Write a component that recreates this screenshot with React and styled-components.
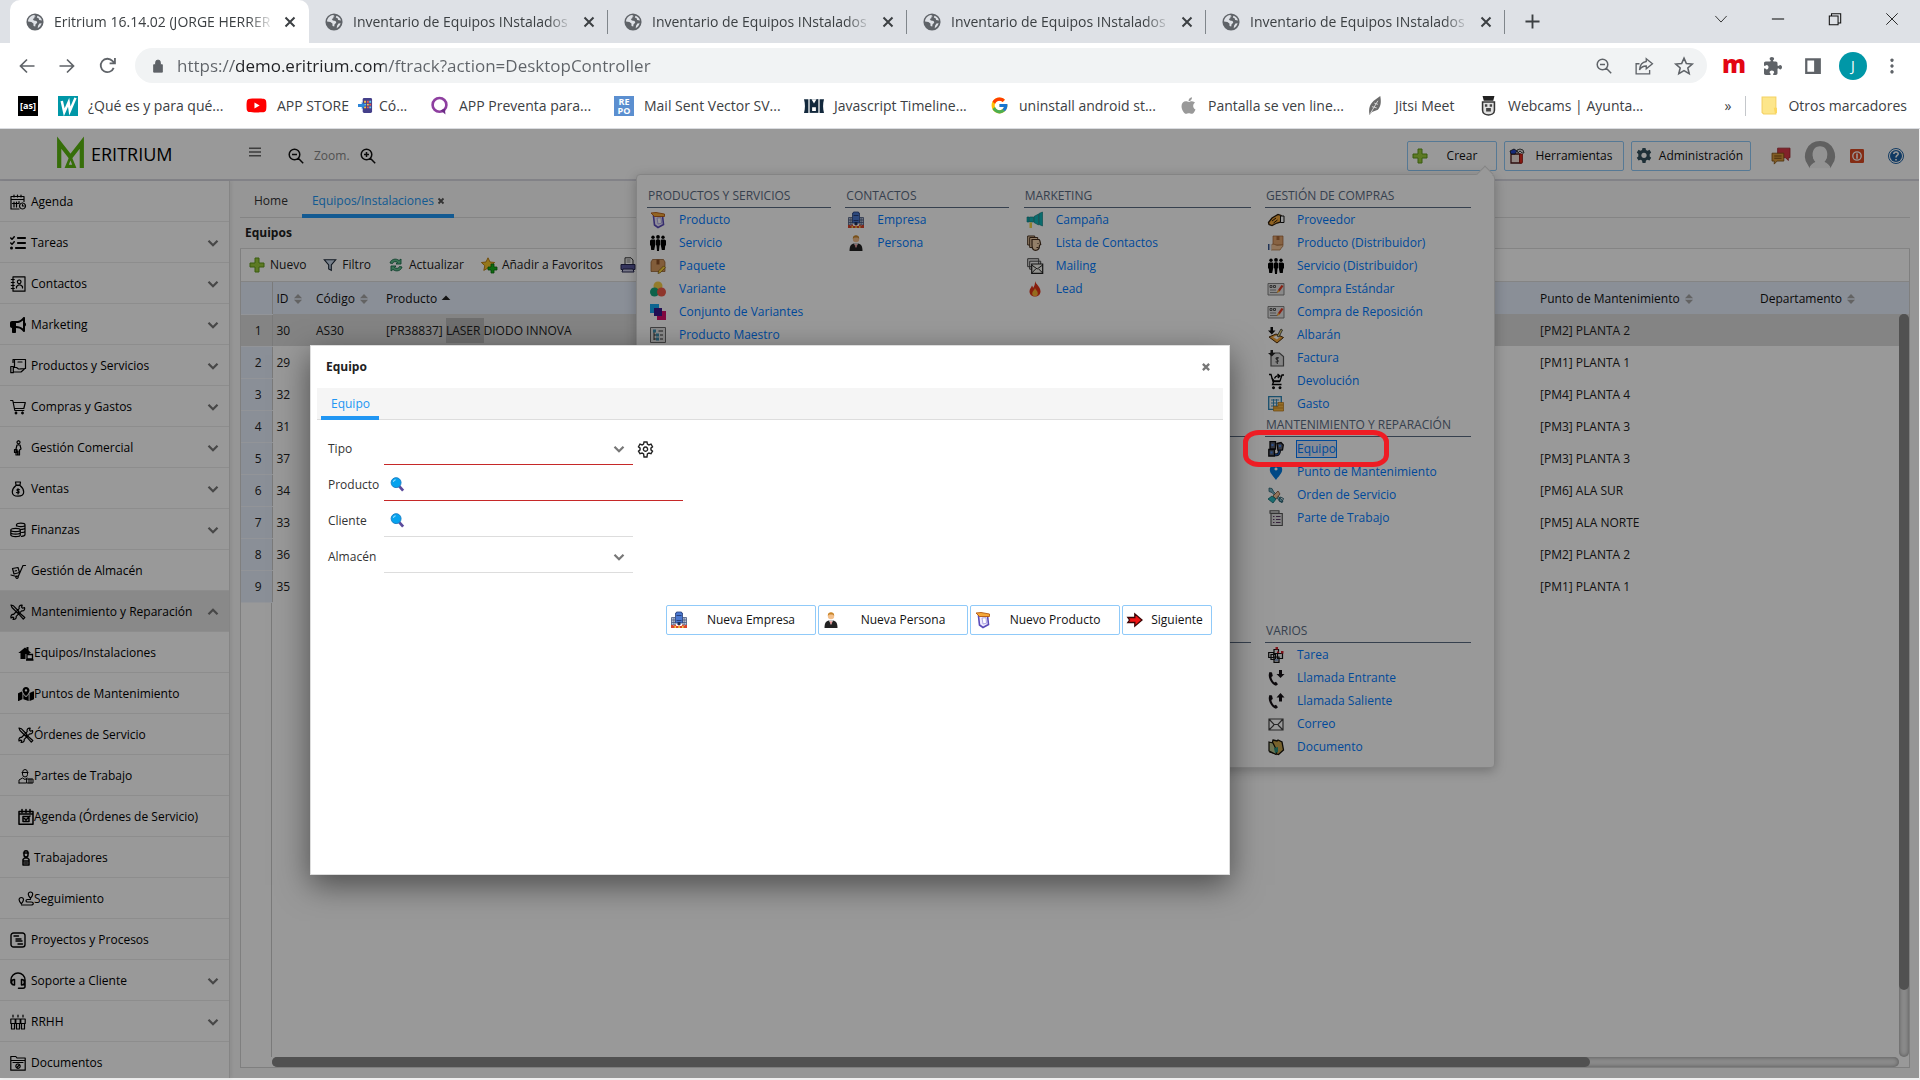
import React from "react";
import styled, { createGlobalStyle, css } from "styled-components";
import { FaListCheck, FaBullhorn, FaPuzzlePiece, FaApple, FaYoutube } from "react-icons/fa6";
import { FaMapMarkedAlt } from "react-icons/fa";
import { FcGoogle } from "react-icons/fc";

const GlobalStyle = createGlobalStyle`
  *, *::before, *::after { box-sizing: border-box; }
  body { margin: 0; background: #fff; color: #212121; font: 12px/16px "Open Sans", "Noto Sans", sans-serif; }
  button, input, select { font: inherit; color: inherit; border: 0; background: none; padding: 0; margin: 0; border-radius: 0; }
  button { cursor: pointer; }
  a { color: inherit; text-decoration: none; }
  ul { list-style: none; margin: 0; padding: 0; }
  h2, h3 { margin: 0; font: inherit; }
  svg { display: block; flex: none; }
`;

/* ---------- icons ---------- */

const Svg = styled.svg`
  width: ${(p) => p.$s}px;
  height: ${(p) => p.$s}px;
  overflow: visible;
`;

const line = { fill: "none", stroke: "currentColor", strokeWidth: 1.2, strokeLinecap: "round", strokeLinejoin: "round" };

const art = {
  globe: (
    <>
      <circle cx="8" cy="8" r="7.6" fill="#5f6368" />
      <path d="M7.2 1.8C4 2.2 1.9 4.800 1.800 7.600l3 .3 1.800 1.400.1 2.200 1.500.4.300-2 1.500-1.300-.6-1.500-2.400-.5-1-1.300 1.400-.6.2-1.500 1.200-.4zM10.200 2.400 9.600 4l1.600.7.5 1.600 2.500.3C13.600 4.500 12.200 3 10.200 2.400zM13.900 9.200l-2 .2-1.200 2-.3 2.100c1.700-.7 3-2.300 3.500-4.300z" fill="#dee1e6" />
    </>
  ),
  close: <path d="M3.500 3.500l9 9M12.500 3.500l-9 9" fill="none" stroke="currentColor" strokeWidth="2" />,
  closeBold: <path d="M3 3l10 10M13 3L3 13" fill="none" stroke="currentColor" strokeWidth="3.600" />,
  thinClose: <path d="M1.500 1.500l13 13M14.500 1.500l-13 13" fill="none" stroke="currentColor" strokeWidth="1" />,
  plusThin: <path d="M8 0.500v15M.500 8h15" fill="none" stroke="currentColor" strokeWidth="2" />,
  down: <path d="M1.500 4.500l6.500 7 6.500-7" fill="none" stroke="currentColor" strokeWidth="1.100" />,
  min: <path d="M1 8h14" stroke="currentColor" strokeWidth="1.200" />,
  max: <path d="M1.500 4.500h10v10h-10zM4 4.500V2h10.500v10.500h-3" fill="none" stroke="currentColor" strokeWidth="1.200" />,
  back: <path d="M15.500 8H1.500M8 1.500L1.500 8 8 14.500" fill="none" stroke="currentColor" strokeWidth="1.700" />,
  fwd: <path d="M.500 8h14M8 1.500L14.500 8 8 14.500" fill="none" stroke="currentColor" strokeWidth="1.700" />,
  reload: <path d="M13.800 10.200A6.300 6.300 0 1 1 12.600 3.700L15 6M15 1v5h-5" fill="none" stroke="currentColor" strokeWidth="1.700" />,
  lock: <path d="M3 6.500h10V15H3zM5.200 6.500V4a2.800 2.800 0 0 1 5.600 0v2.500" fill="currentColor" fillRule="evenodd" stroke="currentColor" strokeWidth="1" />,
  zoomOut: <path d="M6.500 1.200a5.300 5.300 0 1 0 0 10.600 5.300 5.300 0 0 0 0-10.600zM10.300 10.300L15.200 15.200M4 6.500h5" fill="none" stroke="currentColor" strokeWidth="1.500" />,
  zoomIn: <path d="M6.500 1.200a5.300 5.300 0 1 0 0 10.600 5.300 5.300 0 0 0 0-10.600zM10.300 10.300L15.200 15.200M4 6.500h5M6.500 4v5" fill="none" stroke="currentColor" strokeWidth="1.500" />,
  share: <path d="M4 6H1v9h12v-3.500M10 1.500L15.500 6 10 10.500V8C7 8 5.300 9 4 11.500 4.300 7.500 6.300 4.500 10 4z" fill="none" stroke="currentColor" strokeWidth="1.200" />,
  star: <path d="M8 1l2.100 4.800 5.200.5-3.900 3.400 1.200 5.100L8 12.100l-4.600 2.700 1.200-5.100L.7 6.300l5.200-.5z" fill="none" stroke="currentColor" strokeWidth="1.400" />,
  panel: <path d="M1 1h14v14H1zM3 3v10h6V3z" fill="currentColor" fillRule="evenodd" />,
  dots: <path d="M8 .5a1.700 1.700 0 1 0 .01 0zM8 6.300a1.700 1.700 0 1 0 .01 0zM8 12.100a1.700 1.700 0 1 0 .01 0z" fill="currentColor" />,
  w: (
    <>
      <path d="M0 0h16v16H0z" fill="#0097a7" />
      <path d="M3 4l2 9L8.500 5l1 7L14 1.500" fill="none" stroke="#fff" strokeWidth="2" />
    </>
  ),
  phoneApp: (
    <>
      <rect x="5" y="0" width="10" height="16" rx="1.500" fill="#45408a" />
      <path d="M6.500 3h2v2h-2zM9.500 6h2v2h-2zM6.500 9h2v2h-2z" fill="#f6c445" />
      <path d="M9.500 3h2v2h-2zM12 6h2v2h-2zM9.500 9h2v2h-2z" fill="#ef5b52" />
      <path d="M12 3h2v2h-2zM6.500 6h2v2h-2zM12 9h2v2h-2z" fill="#5fc9f0" />
      <path d="M0 6.500h4V4l4 4-4 4V9.500H0z" fill="#2e86d8" />
    </>
  ),
  ring: (
    <>
      <circle cx="8" cy="7.500" r="5.800" fill="none" stroke="#8e3fa0" strokeWidth="2.200" />
      <path d="M9 12l4 3.500-.5-5" fill="#6c2a86" />
    </>
  ),
  film: (
    <>
      <path d="M0 2.500h3.500v11H0c1-3.500 1-7.500 0-11zM16 2.500h-3.500v11H16c-1-3.500-1-7.500 0-11z" fill="#12283c" />
      <path d="M4.500 2.500h7v11h-7z" fill="#12283c" />
      <path d="M6 2.500h4L8 6zM6.500 9h3v3h-3z" fill="#fff" />
    </>
  ),
  feather: (
    <>
      <path d="M3 16c-1-5 0-9 3.500-12L12 0c1 5 .5 9-2 11.500L5 13.500z" fill="#6b6b6b" />
      <path d="M3.500 15L10 4M5 9l4 1M7 6l3 1" stroke="#d8d8d8" strokeWidth=".8" fill="none" />
    </>
  ),
  crest: (
    <>
      <path d="M3 0h10l-1 4H4z" fill="#222" />
      <path d="M3 5h10v7c0 3-3 4-5 4s-5-1-5-4z" fill="#e0e0e0" stroke="#333" strokeWidth="1.300" />
      <path d="M5 7h2v2H5zM9 7h2v2H9zM6 10h4v3H6z" fill="#444" />
    </>
  ),
  folder: (
    <>
      <path d="M1 0h13v16H2.500L1 14.500z" fill="#fde68a" stroke="#f4d163" />
      <path d="M12 10h3v5h-2z" fill="#fbd75e" />
    </>
  ),
  calendar: <path {...line} d="M1 2.500h13v5M1 2.500V15h8M1 5.500h13M4 1v2M7.500 1v2M11 1v2M4 8v5M6.500 8v5M9 7.500v2M2.500 9.500h6M12.500 9a3 3 0 1 0 .01 0M12.500 10.500V12H14" />,
  contact: <path {...line} d="M3 .8h12v14.400H3zM1.300 3.500h3M1.300 6.500h3M1.300 9.500h3M1.300 12.500h3M9.200 4a1.800 1.800 0 1 0 .01 0M6.500 12V10.500l2-1.500h2l2 1.500V12" />,
  handBox: <path {...line} d="M4.500 9V1.500h11v9l-5 .3M3 4.500V1.500h1.500M8 4h4M.8 8.500h2.500v6.200H.8zM3.500 9.500h3l2 1.500h2.500M3.500 14h7.500l4-3.500" />,
  cart: <path {...line} d="M.6 1.500h2.200l2 10h9M3.300 3.500h12l-1.500 6H4.500M6 13.200a.8.8 0 1 0 .01 0M12.500 13.200a.8.8 0 1 0 .01 0" />,
  walker: <path {...line} d="M8.500 .8a1.500 1.500 0 1 0 .01 0M7 5h3l1 4-1.500 1v5H8v-4l-.5 4H6V9zM4.500 9.500H7v3H4.500z" />,
  bag: <path {...line} d="M5.500 1h5L10 4H6zM6 4.500C3.500 6.500 2.300 8.500 2.300 11c0 2.800 1.800 4.200 5.700 4.200s5.700-1.400 5.700-4.200c0-2.500-1.200-4.500-3.700-6.500zM9.500 8.700c-2.500-1-3.500.3-1.500 1.300s1 2.500-1.500 1.500M8 7.700v5.200" />,
  coins: <path {...line} d="M6.500 4V2.800C6.500.5 15 .5 15 2.800v9.700c0 1-1.500 1.700-3.500 1.900M6.500 3c0 2.200 8.500 2.200 8.500 0M10 7.500c3 0 5-.7 5-1.700M11.500 10.500c2 0 3.500-.6 3.500-1.500M.8 8c0-2.200 9.500-2.200 9.500 0v5c0 2.200-9.500 2.200-9.500 0zM.8 8c0 2.200 9.500 2.200 9.500 0M.8 10.500c0 2.200 9.500 2.200 9.500 0" />,
  dolly: <path {...line} d="M15.500 2.500h-2.500L8 14M1 12l5.500 1.500M2.500 5.500l5.500-1 1.500 5-5.500 1.500zM5 8l1.500-.4M7 13a1.200 1.200 0 1 0 .01 0" />,
  tools: <path {...line} d="M1 1l2.500.8L9 7.500 7.500 9 2 3.500zM9 8.500l5.800 5-1.500 1.700-5.300-6M14.500 3.500l-2 .7-1-1 .7-2C10 .8 8.500 2.500 9.200 4.700L3.500 10.500C1.500 10 .5 12 1 14l1.800-1 1 1L3 15.300c2 .5 3.700-1 3.200-3l5.500-5.500c2 .6 3.600-1.200 2.800-3.300z" />,
  houseBox: (
    <>
      <path d="M.3 8L7 2.500 8.500 3.700V2h2v3.300L13 8h-1.500v1H7.500v5H2.500V8z" fill="currentColor" />
      <path d="M9 9.500h5.500V14H9zM8 15h7.500" fill="none" stroke="currentColor" strokeWidth="1.300" />
    </>
  ),
  worker: <path {...line} strokeWidth="1" d="M4 4.500h6M4.500 4.500a2.500 3 0 0 1 5 0v2a2.500 2.500 0 0 1-5 0zM1 15v-3l3.500-2L7 11.500 9 10M1 15h7M9 11h6v4H9zM11 11v4M13 11v4" />,
  calCheck: <path {...line} strokeWidth="1.500" d="M1 2.500h14v12.700H1zM1 5h14M4 .5v3M8 .5v3M12 .5v3M5 7.500h6v5H5zM6.500 9.500l1.500 1.500 4-4" />,
  guard: <path {...line} strokeWidth="1.500" d="M5.500 3h5M6 3c0-3 4-3 4 0v2c0 2.500-4 2.500-4 0zM5 15V9.500L6.500 8h3L11 9.500V15zM5 11h6M6.500 13h3" />,
  route: <path {...line} d="M12.500 1a2.200 2.200 0 0 1 2.200 2.300c0 1.500-2.200 4-2.200 4s-2.200-2.500-2.200-4A2.200 2.200 0 0 1 12.500 1zM3.300 6.500a2.200 2.200 0 0 1 2.200 2.300c0 1.500-2.200 4-2.200 4s-2.200-2.500-2.200-4a2.200 2.200 0 0 1 2.200-2.300zM12.500 8.500H9.500c-2 0-2 2.500 0 2.500H13c3 0 3 3 0 3H3.500" />,
  process: <path {...line} strokeWidth="1.400" d="M3.500 1h9A2.500 2.500 0 0 1 15 3.500v9a2.500 2.500 0 0 1-2.500 2.500h-9A2.500 2.500 0 0 1 1 12.500v-9A2.500 2.500 0 0 1 3.500 1zM4 4h4.500M6 7h5M6 9h6M8 12h4.500" />,
  headset: <path {...line} strokeWidth="1.500" d="M1 10V7a7 7 0 0 1 14 0v6.500c0 1-1 1.700-2 1.700H8.500M4.500 6.500v5.500c-4 0-4-5.500 0-5.500zM11.500 6.500v5.500c4 0 4-5.500 0-5.500z" />,
  people: <path {...line} d="M3 1v2M8 1v2M13 1v2M.800 5h4.400v4.500H.8zM5.800 5h4.400v4.500H5.800zM10.800 5h4.400v4.500h-4.400zM1.500 9.500V15h3V9.500M6.500 9.500V15h3V9.500M11.500 9.500V15h3V9.500" />,
  docFolder: <path {...line} d="M.8 15.200V1.500h5L7 3h8.200v12.200zM.8 5.500h14.400M3 7.500h10M8 9a2.200 2.200 0 1 0 .01 0M7.300 12l1.500-1.500" />,
  plus: <path d="M6 1h4v5h5v4h-5v5H6v-5H1V6h5z" fill="#9ccc3c" stroke="#5f9a1a" strokeWidth="1" />,
  filter: <path d="M1.500 2h13L9.500 8v6l-3-1.500V8z" fill="#c9d8ea" stroke="#1e2a3a" strokeWidth="1.300" />,
  refresh: (
    <>
      <path d="M2 6c1-4 6-5 9-2.500L13 2v5H8l1.500-1.500C7.500 4 5 4.500 4.500 6.500z" fill="#5fc08c" stroke="#17694a" strokeWidth=".9" />
      <path d="M14 10c-1 4-6 5-9 2.500L3 14V9h5l-1.500 1.500c2 1.500 4.500 1 5-1z" fill="#5fc08c" stroke="#17694a" strokeWidth=".9" />
    </>
  ),
  fav: (
    <>
      <path d="M7 .8l2 4.200 4.700.5-3.500 3.200 1 4.700L7 11l-4.200 2.400 1-4.700L.4 5.500 5 5z" fill="#f9c62c" stroke="#b8770a" strokeWidth=".9" />
      <path d="M10 7h3v3h3v3h-3v3h-3v-3H7v-3h3z" fill="#18b31c" stroke="#0a6d10" strokeWidth=".8" />
    </>
  ),
  print: (
    <>
      <path d="M5 8V.8h6L13 3v5" fill="#fff" stroke="#333" />
      <path d="M6.500 3h4M6.500 5h4" stroke="#777" />
      <path d="M1 7.500h14v5H1z" fill="#5a5a9e" stroke="#24244e" />
      <path d="M3 12h10l1 3H2z" fill="#c9c9e6" stroke="#24244e" />
    </>
  ),
  toolbox: (
    <>
      <path d="M2 6h9v9H2z" fill="#f2e3dd" stroke="#4b1818" strokeWidth="1.300" />
      <path d="M1 3l4-2 3 2-2 3H2z" fill="#2947c8" stroke="#111" strokeWidth=".8" />
      <path d="M8 2l3-1 3 1 1 3h-2l-2-2-2 2z" fill="#ddd" stroke="#222" strokeWidth=".8" />
      <path d="M10.500 6h3v8a1.500 1.500 0 0 1-3 0z" fill="#e3271a" stroke="#7e0e08" strokeWidth=".7" />
    </>
  ),
  gear: (
    <>
      <path d="M6.500 0h3l.5 2 1.500.7 2-.9 1.700 2.700-1.500 1.400v2.500l1.500 1.400-1.700 2.700-2-.8-1.500.8-.5 2.500h-3l-.5-2.500-1.500-.8-2 .8L.8 9.800l1.500-1.400V5.900L.8 4.500l1.700-2.700 2 .9L6 2z" fill="#34515e" />
      <circle cx="8" cy="7.300" r="2.600" fill="#fff" />
    </>
  ),
  gearLine: <path d="M6.600 .9h2.800l.4 2 1.400.8 2-.7 1.400 2.400-1.500 1.300v1.600l1.500 1.300-1.400 2.400-2-.7-1.400.8-.4 2.900H6.600l-.4-2.900-1.400-.8-2 .7-1.400-2.400 1.500-1.300V6.700L1.400 5.400 2.800 3l2 .7 1.400-.8zM8 5.700a2 2 0 1 0 .01 0" fill="none" stroke="#222" strokeWidth="1.300" />,
  chat: (
    <>
      <path d="M5 1h11v8.500h-1.500V12L12 9.500H5z" fill="#d93a46" stroke="#9c1e2a" strokeWidth=".7" />
      <path d="M0 5.500h10.500v7H4.500L2 15.200v-2.700H0z" fill="#d99a3c" stroke="#7c4c10" strokeWidth=".7" />
      <path d="M2 8h6.500M2 10h6.500" stroke="#7c4c10" strokeWidth=".9" />
    </>
  ),
  avatar: (
    <>
      <path d="M8 0a8 8 0 0 1 6.500 12.700l-1 1.800C13 13 11.500 12 10 11.500 13 9 12 3.500 8 3.500S3 9 6 11.500C4.500 12 3 13 2.500 14.500l-1-1.800A8 8 0 0 1 8 0z" fill="#a0a0a0" />
      <path d="M8 2.800c4.500 0 5 6 2.200 8.200 1.500.6 3 1.700 3.500 3.500H2.300C2.800 12.700 4.300 11.600 5.800 11 3 8.800 3.500 2.800 8 2.800z" fill="#f6f6f6" />
    </>
  ),
  power: (
    <>
      <rect x="0" y="0" width="16" height="16" rx="1.500" fill="#dc4a22" />
      <circle cx="8" cy="8" r="4.800" fill="none" stroke="#fff" strokeWidth="1.500" />
      <path d="M8 5v6" stroke="#fff" strokeWidth="1.800" />
    </>
  ),
  help: (
    <>
      <circle cx="8" cy="8" r="7.500" fill="#fff" stroke="#1d62a5" />
      <circle cx="8" cy="8" r="6" fill="#1d62a5" />
      <path d="M5.800 6c.2-2.700 4.600-2.500 4.400 0C10 7.600 8 7.500 8 9.500M8 11v1.500" fill="none" stroke="#fff" strokeWidth="1.600" />
    </>
  ),
  product: (
    <>
      <path d="M3.500 4l9-.5 1 9L8 15.500 4.500 13z" fill="#efeaff" stroke="#5a4bb8" strokeWidth="1.600" />
      <path d="M7 6l4-.3.5 5.500-3.500.8z" fill="#fff" stroke="#8f84d8" strokeWidth=".7" />
      <path d="M1 1l3.500 3.500L14.500 4.500V2L6 .5z" fill="#f5a83a" stroke="#b65a10" strokeWidth=".9" />
    </>
  ),
  team: (
    <g fill="#000">
      <circle cx="3" cy="2.300" r="1.700" />
      <circle cx="8" cy="1.900" r="1.900" />
      <circle cx="13" cy="2.300" r="1.700" />
      <path d="M0 5.500l1.500-1h3l.7.500v5l-1 5h-3L.8 11 0 10zM5.800 5.500L7 4.200h2l1.200 1.300V10l-.7.500L9 16H7l-.5-5.500-.7-.5zM10.800 5l.7-.5h3l1.500 1V10l-.8 1-.4 4h-3l-1-5z" />
    </g>
  ),
  pack: (
    <>
      <path d="M1 4l1.500-2.500h11L15 4v9.500H1z" fill="#d99c62" stroke="#8a5425" strokeWidth=".7" />
      <path d="M6.500 1.500h3v5h-3z" fill="#8a4f25" />
      <path d="M8 15.500l.6-2.600 5-5 1.800 1.800-5 5z" fill="#f8d23c" stroke="#7a5510" strokeWidth=".7" />
    </>
  ),
  variant: (
    <>
      <circle cx="8" cy="5" r="4.500" fill="#f7cf4a" />
      <circle cx="4.500" cy="11" r="4.500" fill="#18a37c" />
      <circle cx="11.500" cy="11" r="4.500" fill="#ee5a4a" />
    </>
  ),
  variants: (
    <>
      <path d="M0 0h9v9H0z" fill="#18a8f0" />
      <path d="M7 7h9v9H7z" fill="#d8106c" />
      <path d="M4 4h8v8H4z" fill="#3a1c8c" />
    </>
  ),
  tree: (
    <>
      <path d="M.5.500h15v15H.5z" fill="#e6e6e6" stroke="#6c6c6c" />
      <path d="M4 4v9M4 8h4M4 12h4M8.500 4H13M10 8h3M10 12h3" stroke="#333" fill="none" />
      <path d="M3 2.500h3v3H3zM6 6.500h3v3H6zM6 10.500h3v3H6z" fill="#3f8fb0" />
    </>
  ),
  company: (
    <>
      <path d="M.5 5.500H4V13H.5zM12 5.500h3.500V13H12z" fill="#dfe6f3" stroke="#44557c" strokeWidth=".8" />
      <path d="M2.200 6v7M13.800 6v7M.5 8h3.500M.5 10.500h3.500M12 8h3.500M12 10.500h3.500" stroke="#44557c" strokeWidth=".8" />
      <path d="M4.500 1h1V0h5v1h1v10h-7z" fill="#4a78d0" stroke="#27407c" strokeWidth=".8" />
      <path d="M5.500 3.500h5M5.500 8.500h5" stroke="#27407c" />
      <path d="M6.500 10h3v3h-3z" fill="#20325c" />
      <path d="M0 13h2l1 1 1-2 1.500 2H7l1-1 1 1h1.500L12 12l1 2 1-1h2v3H0z" fill="#d8442c" />
      <path d="M3.500 14h1.500v2H3.500zM7.300 14h1.500v2H7.300zM11 14h1.500v2H11z" fill="#f5cd3c" />
    </>
  ),
  person: (
    <>
      <circle cx="8" cy="4" r="3.200" fill="#f3c08c" />
      <path d="M4.800 3.800C4.500-.8 11.500-.8 11.200 3.800L9.500 2.500h-3z" fill="#c9862a" />
      <path d="M1.500 16c0-5 1.500-7 4.500-7.500h4c3 .5 4.500 2.500 4.500 7.500z" fill="#222" />
      <path d="M6 8.500h4L8 13z" fill="#fff" />
      <path d="M7.300 9.500h1.400L8 13z" fill="#c22" />
    </>
  ),
  campaign: (
    <>
      <path d="M0 5h2v5H0zM2.500 5h4v5h-4zM7 4.500L11.500 2v11L7 10.500zM12 1.500L15.500 0v14L12 12.500z" fill="#12b5b8" stroke="#08777a" strokeWidth=".6" />
      <path d="M2.500 10.500H5V16H2.500z" fill="#f5d848" />
    </>
  ),
  faces: (
    <>
      <path d="M.7 1h7v9h-7z" fill="#f6d4ae" stroke="#46301e" />
      <path d="M2.700 2.500h8v10h-8z" fill="#f6d4ae" stroke="#46301e" />
      <path d="M5 4.500h7c1.500 1 1 3 1.700 5l-1.200.8c0 3-1.500 5-4 5S5 13 5 10z" fill="#f6d4ae" stroke="#46301e" strokeWidth="1.200" />
      <path d="M11 8v1M9.500 12.500h2" stroke="#46301e" />
    </>
  ),
  mails: (
    <>
      <path d="M.7.700h11v8h-11zM2.700 3.200h11v8h-11z" fill="#eee" stroke="#444" />
      <path d="M4.700 6h11v9.300h-11z" fill="#f4f4ee" stroke="#222" strokeWidth="1.200" />
      <path d="M4.700 7l5.500 4 5.500-4M4.700 15l4-4M15.700 15l-4-4" fill="none" stroke="#222" />
    </>
  ),
  fire: (
    <>
      <path d="M8 0c1 3.500 5.500 5.500 5.500 10.500 0 3-2.500 5-5.500 5s-5.500-2-5.500-5C2.500 8 4 7 5 4.500c.7 1 1 1.500 1 2.500C7.500 5 8.300 2.500 8 0z" fill="#e23318" />
      <path d="M8 7c.5 2 2.800 3 2.800 5.500A2.800 2.800 0 0 1 8 15.200a2.800 2.800 0 0 1-2.800-2.700C5.200 10 7.500 9.500 8 7z" fill="#f9b233" />
    </>
  ),
  handshake: (
    <>
      <path d="M.5 10.500L4 6l6-3.500 3 1v6.500l-4 1-5 2.500-3-1z" fill="#f0a53a" stroke="#2a1a08" strokeWidth="1.300" />
      <path d="M4 9l4-3M5.500 11l4-3" stroke="#2a1a08" fill="none" />
      <path d="M12.500 4H16v6.500h-3.500z" fill="#fff" stroke="#111" />
    </>
  ),
  handPack: (
    <>
      <path d="M5 1h10v9H5z" fill="#e3a671" stroke="#9d6030" strokeWidth=".7" />
      <path d="M8.500 1h3v4h-3z" fill="#a86838" />
      <path d="M3 10c3-2 4 0 6 .5l5-.5c1.500 0 1.500 1.500 0 2l-2 3H3z" fill="#f3c496" stroke="#a56a38" strokeWidth=".7" />
      <path d="M0 9h1.500v6H0z" fill="#36558f" />
      <path d="M2 9h1.500v6H2z" fill="#e8ecf4" />
    </>
  ),
  order: (
    <>
      <path d="M0 2.500h16v11.500H0z" fill="#e4e4e4" stroke="#777" strokeWidth=".9" />
      <path d="M2 4.500h2v2H2zM5.500 4.500h2v2h-2z" fill="none" stroke="#555" />
      <path d="M2 9h6M2 11.500h7" stroke="#888" />
      <path d="M9 12l1-3 3.500-5L15.500 5 12 10z" fill="#e33a22" />
      <path d="M9 12l1-3 2 1.200z" fill="#f6c23a" />
    </>
  ),
  delivery: (
    <>
      <path d="M1 10l7-3 7.500 3.500L9 16z" fill="#f0a53a" stroke="#4a2a08" />
      <path d="M5 10l4-1.500 3 1.500-3 2.500z" fill="#fff" />
      <path d="M9 9l4-7 1.500 1L11 10z" fill="#e9d77a" stroke="#333" strokeWidth=".8" />
      <path d="M2.500 0h2.500v3.500h2.500L3.800 7.500 0 3.500h2.500z" fill="#111" />
    </>
  ),
  invoice: (
    <>
      <path d="M3 3h8.500L15.500 6.500V16H3z" fill="#ddd" stroke="#555" strokeWidth="1.200" />
      <path d="M11 8c-3-1-4 .5-2 1.700s1.500 3-1.500 2M9.300 7v7" fill="none" stroke="#444" strokeWidth="1.100" />
      <path d="M2.500 0h2.500v3h2.500L3.800 6.500 0 3h2.500z" fill="#222" />
    </>
  ),
  returnCart: <path d="M1 1.500h2l2 7h7M3.500 4.500L6 8h6l2-6h2M5.500 9l-1 2.500h9M6.500 5.500c1-2.500 2.500-3 4.500-2.500M9.500 1L12 3 9.800 5M5.500 14a.8.8 0 1 0 .01 0M12 14a.8.8 0 1 0 .01 0" fill="none" stroke="#000" strokeWidth="1.300" />,
  expense: (
    <>
      <path d="M.7.700h12.600v12.600H.7z" fill="#f5f8fb" stroke="#2c86b8" strokeWidth="1.300" />
      <path d="M3 4h8M3 7h8M3 10h8M5.500 3v8M8.500 3v8" stroke="#2c86b8" strokeWidth=".9" />
      <path d="M10 6.500h5.500V15H5.500v-4.500H10z" fill="#f7b844" stroke="#b87412" strokeWidth=".7" />
      <path d="M10 9h5M6 12h9" stroke="#b87412" strokeWidth=".7" />
    </>
  ),
  equip: (
    <>
      <path d="M2 .7h5.500V8H2zM9 2.500l4-1 2.300 2.500-.8 5L10 9.500zM.8 8.500h5.700V15H.8z" fill="#5c6374" stroke="#0c0c10" strokeWidth="1.300" />
      <path d="M3.500 3h2v2h-2zM11 4h2v2h-2zM2.500 10.500h2v2h-2z" fill="#4a86e8" />
      <path d="M7 13.500c3 1 4.500-1 4.500-4" fill="none" stroke="#111" strokeWidth="3" />
      <path d="M7 13.500c3 1 4.500-1 4.500-4" fill="none" stroke="#1d4ea0" strokeWidth="1.500" />
    </>
  ),
  pin: <path d="M8 0c4 0 6.200 2.500 6.200 5.800C14.200 9.500 10 13 8 16 6 13 1.800 9.500 1.800 5.800 1.800 2.500 4 0 8 0zM8 3.500a1.500 1.500 0 1 0 .01 0" fill="#007be0" fillRule="evenodd" />,
  service: (
    <>
      <path d="M1 1l3 .5 1.500 3L14 13l1 2-2 .5L4 5.500 1 4.500z" fill="#7bb6c9" stroke="#2e6474" strokeWidth=".8" />
      <path d="M5 9l5-5 2 3-4 5z" fill="#f0c19a" stroke="#7c4c2c" strokeWidth=".8" />
      <path d="M0 12l4-3 4 3-3 4z" fill="#2cb6bc" stroke="#126a70" strokeWidth=".8" />
      <path d="M12 10l3.500 1.500L14 15l-3-1z" fill="none" stroke="#2e6474" />
    </>
  ),
  report: (
    <>
      <path d="M3 3.500h11.300v12H3zM2 .7h9v2.500H2z" fill="#ddd" stroke="#555" strokeWidth="1.100" />
      <path d="M5 6.500h1.500M8 6.500h4.500M5 9.500h1.500M8 9.500h4.500M5 12.500h1.500M8 12.500h4.500" stroke="#5c3c66" strokeWidth="1.200" />
    </>
  ),
  task: (
    <>
      <path d="M.7 5.500h5v5h-5zM6 2.500h4.500v4H6zM9.500 6.500h5v5h-5zM3 7.500h4.500v5H3zM6 10h5v5.300H6z" fill="#eee" stroke="#111" strokeWidth="1.200" />
      <path d="M7.500 0H10v2.500H7.500zM13 4h2.500v2.500H13zM9 4.500h2V6H9z" fill="#d8202c" />
      <path d="M7 12h3v2H7z" fill="#8aa0c8" />
    </>
  ),
  callIn: <path d="M1.500 2C-1 7 3 14 8 15.800l2-1.500-2-2.500-1.700.7C4.500 10.800 3.600 9 3.400 7L4.800 6 4 2.500zM11 0h3v4h2.500L12.500 8 8.500 4H11z" fill="#151015" />,
  callOut: <path d="M1.500 2C-1 7 3 14 8 15.800l2-1.500-2-2.500-1.700.7C4.500 10.800 3.600 9 3.400 7L4.800 6 4 2.500zM11 8.500h3v-4h2.500L12.500 0 8.500 4.500H11z" fill="#151015" />,
  mail: <path d="M1 3h14v11H1zM1.500 3.500L6 8.500h4l4.500-5M1.500 13.500L6 9M14.500 13.500L10 9" fill="none" stroke="#444" strokeWidth="1.200" />,
  docs: (
    <>
      <path d="M5 1l4 1 1-1 4 2 1.500 8-5 4.500L2 13z" fill="#c9a34a" stroke="#15120a" strokeWidth="1.300" />
      <path d="M1 3l4 1 4 8-1 3.500-7-3.500z" fill="#b7c48c" stroke="#15120a" strokeWidth="1.200" />
      <path d="M6 9l4-1v5l-3 1z" fill="#2a8f7e" />
    </>
  ),
  magnifier: (
    <>
      <path d="M9.500 9.500l4.500 5" stroke="#5b4a9c" strokeWidth="3" />
      <circle cx="6.500" cy="6" r="5.300" fill="#06a3ee" stroke="#1b7ec4" strokeWidth="1" />
      <path d="M3.500 5a3.500 3.500 0 0 1 2.500-2" stroke="#9be0ff" strokeWidth="1.200" fill="none" />
    </>
  ),
  next: <path d="M.8 5.500h7V1.800L15 8l-7.200 6.200v-3.700h-7L2.500 8z" fill="#f01414" stroke="#3c0606" strokeWidth="1.300" />,
  logo: (
    <>
      <path d="M1.300 16V1L8 9.500 14.700 1v15" fill="none" stroke="#5bb810" strokeWidth="2.500" />
      <path d="M8 7.500L4.500 16h7zM8 11.500l1 2.500H7z" fill="#5bb810" fillRule="evenodd" />
    </>
  ),
  caret: <path d="M2 5l6 6 6-6" fill="none" stroke="currentColor" strokeWidth="3" />,
  caretUp: <path d="M2 11l6-6 6 6" fill="none" stroke="currentColor" strokeWidth="3" />,
  burger: <path d="M0 3h16M0 8h16M0 13h16" stroke="currentColor" strokeWidth="2" />,
  sort: <path d="M8 0l6.500 6.800h-13zM8 16l6.500-6.800h-13z" fill="#a6a6a6" />,
  sortUp: <path d="M8 2.500l7 7H1z" fill="#222" />,
};

const Icon = ({ name, size = 16 }) => (
  <Svg $s={size} viewBox="0 0 16 16" aria-hidden="true">
    {art[name]}
  </Svg>
);

/* ---------- browser window ---------- */

const Page = styled.div`
  height: 100vh;
  display: flex;
  flex-direction: column;
  overflow: hidden;
`;

const TabStrip = styled.div`
  display: flex;
  height: 43px;
  flex: none;
  padding-left: 10px;
  background: #dee1e6;
  color: #3c4043;
`;

const BrowserTab = styled.div`
  display: flex;
  align-items: center;
  width: 299px;
  padding: 0 9px 0 16px;
  position: relative;
  ${(p) =>
    p.$active
      ? css`
          background: #fff;
          border-radius: 10px 10px 0 0;
        `
      : css`
          &::after {
            content: "";
            position: absolute;
            right: 0;
            top: 10px;
            height: 24px;
            width: 1px;
            background: #80868b;
          }
        `}
`;

const TabTitle = styled.span`
  flex: 1;
  margin: 0 6px 0 10px;
  overflow: hidden;
  white-space: nowrap;
  font-size: 14px;
  line-height: 20px;
  mask-image: linear-gradient(to right, #000 88%, transparent);
`;

const IconButton = styled.button`
  display: flex;
  align-items: center;
  justify-content: center;
  width: ${(p) => p.$w || 20}px;
  height: ${(p) => p.$w || 20}px;
  flex: none;
  color: ${(p) => p.$color || "#3c4043"};
`;

const NewTab = styled(IconButton)`
  margin-left: 6px;
`;

const WindowButtons = styled.div`
  display: flex;
  align-items: center;
  margin-left: auto;
  padding-bottom: 6px;
  color: #111;
`;

const AddressRow = styled.div`
  display: flex;
  align-items: center;
  flex: none;
  height: 45px;
  padding: 0 9px 0 7px;
  color: #5f6368;
`;

const Omnibox = styled.label`
  display: flex;
  align-items: center;
  flex: 1;
  height: 35px;
  margin: 0 8px 0 8px;
  padding: 0 3px 0 16px;
  border-radius: 18px;
  background: #f1f3f4;
`;

const Url = styled.input`
  flex: 1;
  min-width: 0;
  margin-left: 12px;
  font-size: 17px;
  line-height: 24px;
  color: #5f6368;
  background: linear-gradient(to right, #5f6368 57px, #202124 57px, #202124 207px, #5f6368 207px);
  background-clip: text;
  -webkit-text-fill-color: transparent;
  outline: 0;
`;

const Brand = styled.span`
  width: 38px;
  padding-bottom: 4px;
  text-align: center;
  font-size: 24px;
  line-height: 24px;
  font-weight: 800;
  color: #e30613;
`;

const Profile = styled.button`
  width: 28px;
  height: 28px;
  margin: 0 6px;
  border-radius: 50%;
  background: #0097a7;
  color: #fff;
  font-size: 14px;
`;

const Bookmarks = styled.nav`
  display: flex;
  align-items: center;
  flex: none;
  height: 41px;
  padding: 0 13px 5px 18px;
  border-bottom: 1px solid #dadce0;
  color: #3c4043;
  font-size: 14px;
  line-height: 20px;
  white-space: nowrap;
`;

const Bookmark = styled.a`
  display: flex;
  align-items: center;
  gap: ${(p) => p.$gap || 10}px;
  width: ${(p) => (p.$w ? `${p.$w}px` : "auto")};
`;

const Square = styled.span`
  display: flex;
  align-items: center;
  justify-content: center;
  width: 20px;
  height: 20px;
  background: ${(p) => p.$bg};
  color: #fff;
  font-size: 9px;
  line-height: 9px;
  font-weight: 700;
  text-align: center;
  white-space: pre-line;
`;

const Divider = styled.span`
  width: 1px;
  height: 20px;
  margin: 0 15px 0 14px;
  background: #c4c7cb;
`;

const More = styled.button`
  margin-left: auto;
`;

/* ---------- application ---------- */

const AppFrame = styled.div`
  position: relative;
  flex: 1;
  min-height: 0;
  display: flex;
  flex-direction: column;
  border: solid #efefef;
  border-width: 0 1px 2px 0;
  background: #fafafa;
`;

const Header = styled.header`
  display: flex;
  align-items: center;
  flex: none;
  height: 52px;
  padding: 0 15px 0 57px;
  background: #fff;
  border-bottom: 2px solid #d9d9e2;
`;

const Logo = styled.a`
  display: flex;
  align-items: center;
  gap: 7px;
  width: 186px;
  font-size: 18px;
  line-height: 24px;
  font-weight: 500;
  color: #000;
`;

const BurgerButton = styled(IconButton)`
  padding-bottom: 4px;
`;

const ZoomGroup = styled.div`
  display: flex;
  align-items: center;
  gap: 8px;
  margin-left: 19px;
  padding-top: 4px;
  color: #888;
`;

const Actions = styled.div`
  display: flex;
  align-items: center;
  gap: 7px;
  margin-left: auto;
  padding-top: 4px;
`;

const ActionWrap = styled.div`
  position: relative;
`;

const FrameButton = styled.button`
  display: flex;
  align-items: center;
  width: ${(p) => p.$w}px;
  height: 30px;
  padding: 0 0 0 4px;
  border: 1px solid #90caf9;
  border-radius: 2px;
  background: #fff;
  color: #111;
  white-space: nowrap;

  span {
    flex: 1;
    text-align: center;
  }
`;

const Status = styled.div`
  display: flex;
  align-items: center;
  gap: 15px;
  margin-left: 14px;

  svg:last-child {
    margin-left: 9px;
  }
`;

const CreateMenu = styled.div`
  position: absolute;
  z-index: 2;
  top: 33px;
  right: 2px;
  width: 859px;
  height: 594px;
  padding: 11px 23px 10px 10px;
  display: grid;
  grid-template-columns: 184px 164px 227px 206px;
  grid-template-rows: 229px 206px auto;
  justify-content: space-between;
  background: #fff;
  border: 1px solid #ddd;
  border-radius: 4px;
  box-shadow: 0 3px 12px rgba(0, 0, 0, 0.25);

  &::before {
    content: "";
    position: absolute;
    top: -7px;
    right: 3px;
    width: 12px;
    height: 12px;
    background: #fff;
    border: solid #ddd;
    border-width: 1px 0 0 1px;
    transform: rotate(45deg);
  }
`;

const MenuSection = styled.section`
  grid-column: ${(p) => p.$col};
  grid-row: ${(p) => p.$row};
`;

const MenuTitle = styled.h3`
  height: 22px;
  padding: 1px;
  border-bottom: 1px solid #5b6b82;
  color: #5b6b82;
  text-transform: uppercase;
  line-height: 18px;
`;

const MenuLink = styled.a`
  display: flex;
  align-items: center;
  gap: 13px;
  height: 23px;
  padding-left: 3px;
  color: #007bff;
  white-space: nowrap;

  span {
    ${(p) =>
      p.$focus &&
      css`
        background: #dfe8f8;
        outline: 1px solid #007bff;
      `}
  }
`;

const Body = styled.div`
  display: flex;
  flex: 1;
  min-height: 0;
`;

const Sidebar = styled.nav`
  width: 230px;
  flex: none;
  overflow: hidden;
  background: #fff;
  border-right: 1px solid #dedede;
  box-shadow: 2px 0 3px rgba(0, 0, 0, 0.06);
  color: #000;
`;

const SideItem = styled.a`
  display: flex;
  align-items: center;
  gap: ${(p) => (p.$sub ? 0 : 5)}px;
  height: 41px;
  padding: 1px 10px 0 ${(p) => (p.$sub ? 18 : 10)}px;
  border-bottom: 1px solid #ececec;
  background: ${(p) => (p.$open ? "#e4e4e4" : "transparent")};
  white-space: nowrap;

  svg:last-child {
    margin-left: auto;
    color: #777;
  }
`;

const Workspace = styled.main`
  flex: 1;
  min-width: 0;
  display: flex;
  flex-direction: column;
  padding: 3px 9px 10px 10px;
`;

const TabBar = styled.div`
  display: flex;
  flex: none;
  height: ${(p) => p.$h}px;
  padding-left: ${(p) => p.$pad}px;
  border-bottom: 1px solid #ddd;
  background: ${(p) => p.$bg || "transparent"};
`;

const Tab = styled.button`
  display: flex;
  align-items: center;
  gap: 3px;
  padding: 4px 9px 0 10px;
  border-bottom: 4px solid ${(p) => (p.$on ? "#2196f3" : "transparent")};
  color: ${(p) => (p.$on ? "#2196f3" : "#333")};
  margin: 0 ${(p) => (p.$on ? 0 : 5)}px -1px 0;

  svg {
    color: #555;
  }
`;

const PanelTitle = styled.h2`
  flex: none;
  height: 31px;
  padding: 7px 5px;
  border-bottom: 1px solid #ddd;
  font-weight: 700;
`;

const GridPanel = styled.section`
  flex: 1;
  min-height: 0;
  display: flex;
  flex-direction: column;
  border: solid #d4d4d4;
  border-width: 0 1px 1px 1px;
  background: #fff;
`;

const Toolbar = styled.div`
  display: flex;
  align-items: center;
  gap: 17px;
  flex: none;
  height: 33px;
  padding-left: 8px;
  border-bottom: 1px solid #ddd;
`;

const ToolButton = styled.button`
  display: flex;
  align-items: center;
  gap: 5px;
  white-space: nowrap;
`;

const GridBody = styled.div`
  position: relative;
  flex: 1;
  min-height: 0;
  overflow: hidden;
  background: linear-gradient(to right, transparent 30px, #ccc 30px, #ccc 31px, transparent 31px);
`;

const Table = styled.table`
  width: 100%;
  table-layout: fixed;
  border-collapse: collapse;

  th, td {
    height: 32px;
    padding: 1px 4px 0;
    text-align: left;
    font-weight: 400;
    white-space: nowrap;
  }

  thead th {
    background: #e6eefc;
    color: #111;
  }

  th:first-child {
    text-align: center;
    padding-right: 0;
    border-right: 1px solid #ccc;
    background: #e6eefc;
    border-bottom: 1px solid #f4f7fd;
  }
`;

const Row = styled.tr`
  ${(p) =>
    p.$on &&
    css`
      && th, && td {
        background: #dcdcdc;
      }
    `}
`;

const HeadCell = styled.span`
  display: flex;
  align-items: center;
  gap: 4px;
`;

const Mark = styled.mark`
  background: #b9b9b9;
  color: inherit;
  padding: 4px 0;
`;

const VTrack = styled.div`
  position: absolute;
  top: 32px;
  right: 0;
  bottom: 0;
  width: 10px;
  border-radius: 5px;
  background: #e6e6e6;
  box-shadow: inset 0 0 4px rgba(0, 0, 0, 0.4);
`;

const VThumb = styled.div`
  height: 91%;
  border-radius: 5px;
  background: #888;
`;

const HTrack = styled.div`
  flex: none;
  height: 10px;
  margin: 0 10px 0 31px;
  border-radius: 5px;
  background: #e6e6e6;
  box-shadow: inset 0 0 4px rgba(0, 0, 0, 0.4);
`;

const HThumb = styled.div`
  width: 81%;
  height: 10px;
  border-radius: 5px;
  background: #888;
`;

/* ---------- dialog ---------- */

const Backdrop = styled.div`
  position: absolute;
  inset: 0;
  z-index: 3;
  background: rgba(0, 0, 0, 0.4);
`;

const Dialog = styled.div`
  position: absolute;
  left: 310px;
  top: 216px;
  width: 920px;
  height: 530px;
  padding: 0 6px;
  border: 1px solid #ddd;
  background: #fff;
  box-shadow: 0 10px 30px rgba(0, 0, 0, 0.5);
`;

const DialogHead = styled.div`
  display: flex;
  align-items: center;
  justify-content: space-between;
  height: 42px;
  padding: 0 7px 0 9px;
  font-weight: 700;
`;

const Form = styled.form`
  display: flex;
  flex-direction: column;
  padding: 11px 11px 0;
`;

const Field = styled.div`
  display: grid;
  grid-template-columns: 56px ${(p) => p.$w}px auto;
  align-items: center;
  justify-content: start;
  height: 36px;
  color: #333;
`;

const Control = styled.div`
  display: flex;
  align-items: center;
  height: 32px;
  padding: 0 8px 0 6px;
  border-bottom: 1px solid ${(p) => (p.$required ? "#c62828" : "#ddd")};
  color: #777;

  select, input {
    flex: 1;
    min-width: 0;
    height: 30px;
    appearance: none;
    outline: 0;
  }
`;

const FormActions = styled.div`
  display: flex;
  justify-content: flex-end;
  gap: 2px;
  padding: 30px 0 0;
`;

const Callout = styled.div`
  position: absolute;
  z-index: 4;
  left: 1243px;
  top: 301px;
  width: 146px;
  height: 37px;
  border: 5px solid #ee1c24;
  border-radius: 16px / 12px;
`;

/* ---------- data ---------- */

const bookmarks = [
  { w: 188, icon: <Icon name="w" size={20} />, text: "¿Qué es y para qué..." },
  { w: 112, icon: <FaYoutube size={21} color="#f00" />, text: "APP STORE" },
  { w: 72, gap: 6, icon: <Icon name="phoneApp" size={15} />, text: "Có..." },
  { w: 184, icon: <Icon name="ring" size={19} />, text: "APP Preventa para..." },
  { w: 190, icon: <Square $bg="#5b8fd0">{"RE\nPO"}</Square>, text: "Mail Sent Vector SV..." },
  { w: 186, icon: <Icon name="film" size={20} />, text: "Javascript Timeline..." },
  { w: 189, icon: <FcGoogle size={19} />, text: "uninstall android st..." },
  { w: 187, icon: <FaApple size={19} color="#999" />, text: "Pantalla se ven line..." },
  { w: 113, icon: <Icon name="feather" size={19} />, text: "Jitsi Meet" },
  { w: 170, icon: <Icon name="crest" size={19} />, text: "Webcams | Ayunta..." },
];

const menu = [
  { col: 1, row: 1, title: "Productos y Servicios", items: [["product", "Producto"], ["team", "Servicio"], ["pack", "Paquete"], ["variant", "Variante"], ["variants", "Conjunto de Variantes"], ["tree", "Producto Maestro"]] },
  { col: 2, row: 1, title: "Contactos", items: [["company", "Empresa"], ["person", "Persona"]] },
  { col: 3, row: 1, title: "Marketing", items: [["campaign", "Campaña"], ["faces", "Lista de Contactos"], ["mails", "Mailing"], ["fire", "Lead"]] },
  { col: 4, row: 1, title: "Gestión de Compras", items: [["handshake", "Proveedor"], ["handPack", "Producto (Distribuidor)"], ["team", "Servicio (Distribuidor)"], ["order", "Compra Estándar"], ["order", "Compra de Reposición"], ["delivery", "Albarán"], ["invoice", "Factura"], ["returnCart", "Devolución"], ["expense", "Gasto"]] },
  { col: 3, row: 2, title: "", items: [] },
  { col: 4, row: 2, title: "Mantenimiento y Reparación", items: [["equip", "Equipo", true], ["pin", "Punto de Mantenimiento"], ["service", "Orden de Servicio"], ["report", "Parte de Trabajo"]] },
  { col: 3, row: 3, title: "", items: [] },
  { col: 4, row: 3, title: "Varios", items: [["task", "Tarea"], ["callIn", "Llamada Entrante"], ["callOut", "Llamada Saliente"], ["mail", "Correo"], ["docs", "Documento"]] },
];

const sidebar = [
  { icon: "calendar", text: "Agenda" },
  { el: <FaListCheck size={16} />, text: "Tareas", more: true },
  { icon: "contact", text: "Contactos", more: true },
  { el: <FaBullhorn size={16} />, text: "Marketing", more: true },
  { icon: "handBox", text: "Productos y Servicios", more: true },
  { icon: "cart", text: "Compras y Gastos", more: true },
  { icon: "walker", text: "Gestión Comercial", more: true },
  { icon: "bag", text: "Ventas", more: true },
  { icon: "coins", text: "Finanzas", more: true },
  { icon: "dolly", text: "Gestión de Almacén" },
  { icon: "tools", text: "Mantenimiento y Reparación", open: true },
  { icon: "houseBox", text: "Equipos/Instalaciones", sub: true },
  { el: <FaMapMarkedAlt size={16} />, text: "Puntos de Mantenimiento", sub: true },
  { icon: "tools", text: "Órdenes de Servicio", sub: true },
  { icon: "worker", text: "Partes de Trabajo", sub: true },
  { icon: "calCheck", text: "Agenda (Órdenes de Servicio)", sub: true },
  { icon: "guard", text: "Trabajadores", sub: true },
  { icon: "route", text: "Seguimiento", sub: true },
  { icon: "process", text: "Proyectos y Procesos" },
  { icon: "headset", text: "Soporte a Cliente", more: true },
  { icon: "people", text: "RRHH", more: true },
  { icon: "docFolder", text: "Documentos" },
];

const rows = [
  ["30", "[PM2] PLANTA 2"],
  ["29", "[PM1] PLANTA 1"],
  ["32", "[PM4] PLANTA 4"],
  ["31", "[PM3] PLANTA 3"],
  ["37", "[PM3] PLANTA 3"],
  ["34", "[PM6] ALA SUR"],
  ["33", "[PM5] ALA NORTE"],
  ["36", "[PM2] PLANTA 2"],
  ["35", "[PM1] PLANTA 1"],
];

/* ---------- parts ---------- */

const Browser = () => (
  <>
    <TabStrip>
      {["Eritrium 16.14.02 (JORGE HERRER", ...Array(4).fill("Inventario de Equipos INstalados")].map((title, i) => (
        <BrowserTab key={i} $active={i === 0}>
          <Icon name="globe" size={18} />
          <TabTitle>{title}</TabTitle>
          <IconButton aria-label="Cerrar pestaña"><Icon name="close" /></IconButton>
        </BrowserTab>
      ))}
      <NewTab $w={43} aria-label="Nueva pestaña"><Icon name="plusThin" size={15} /></NewTab>
      <WindowButtons>
        <IconButton $w={57} $color="#333" aria-label="Buscar pestañas"><Icon name="down" size={14} /></IconButton>
        <IconButton $w={57} $color="#111" aria-label="Minimizar"><Icon name="min" size={14} /></IconButton>
        <IconButton $w={57} $color="#111" aria-label="Restaurar"><Icon name="max" size={14} /></IconButton>
        <IconButton $w={57} $color="#111" aria-label="Cerrar"><Icon name="thinClose" size={14} /></IconButton>
      </WindowButtons>
    </TabStrip>
    <AddressRow>
      <IconButton $w={40} $color="#5f6368" aria-label="Atrás"><Icon name="back" /></IconButton>
      <IconButton $w={40} $color="#5f6368" aria-label="Adelante"><Icon name="fwd" /></IconButton>
      <IconButton $w={40} $color="#5f6368" aria-label="Recargar"><Icon name="reload" size={17} /></IconButton>
      <Omnibox>
        <Icon name="lock" size={14} />
        <Url aria-label="Dirección" defaultValue="https://demo.eritrium.com/ftrack?action=DesktopController" />
        <IconButton $w={40} $color="#5f6368" aria-label="Zoom"><Icon name="zoomOut" /></IconButton>
        <IconButton $w={40} $color="#5f6368" aria-label="Compartir"><Icon name="share" size={18} /></IconButton>
        <IconButton $w={40} $color="#5f6368" aria-label="Favorito"><Icon name="star" size={18} /></IconButton>
      </Omnibox>
      <Brand>m</Brand>
      <IconButton $w={40} $color="#5f6368" aria-label="Extensiones"><FaPuzzlePiece size={18} /></IconButton>
      <IconButton $w={40} $color="#5f6368" aria-label="Panel lateral"><Icon name="panel" size={18} /></IconButton>
      <Profile>J</Profile>
      <IconButton $w={38} $color="#5f6368" aria-label="Menú"><Icon name="dots" /></IconButton>
    </AddressRow>
    <Bookmarks>
      <Bookmark href="#" $w={40}><Square $bg="#000">[as]</Square></Bookmark>
      {bookmarks.map((b) => (
        <Bookmark key={b.text} href="#" $w={b.w} $gap={b.gap}>{b.icon}{b.text}</Bookmark>
      ))}
      <More>»</More>
      <Divider />
      <Bookmark href="#"><Icon name="folder" size={17} />Otros marcadores</Bookmark>
    </Bookmarks>
  </>
);

const Menu = () => (
  <CreateMenu>
    {menu.map((s) => (
      <MenuSection key={`${s.col}-${s.row}`} $col={s.col} $row={s.row}>
        <MenuTitle>{s.title}</MenuTitle>
        <ul>
          {s.items.map(([icon, text, focus]) => (
            <li key={text}>
              <MenuLink href="#" $focus={focus}><Icon name={icon} /><span>{text}</span></MenuLink>
            </li>
          ))}
        </ul>
      </MenuSection>
    ))}
  </CreateMenu>
);

const TopBar = () => (
  <Header>
    <Logo href="#"><Icon name="logo" size={27} />ERITRIUM</Logo>
    <BurgerButton $w={24} $color="#666" aria-label="Menú lateral"><Icon name="burger" size={12} /></BurgerButton>
    <ZoomGroup>
      <IconButton $w={20} $color="#111" aria-label="Reducir"><Icon name="zoomOut" /></IconButton>
      <span>Zoom.</span>
      <IconButton $w={20} $color="#111" aria-label="Ampliar"><Icon name="zoomIn" /></IconButton>
    </ZoomGroup>
    <Actions>
      <ActionWrap>
        <FrameButton $w={90}><Icon name="plus" /><span>Crear</span></FrameButton>
        <Menu />
      </ActionWrap>
      <FrameButton $w={120}><Icon name="toolbox" /><span>Herramientas</span></FrameButton>
      <FrameButton $w={120}><Icon name="gear" /><span>Administración</span></FrameButton>
      <Status>
        <Icon name="chat" size={18} />
        <Icon name="avatar" size={30} />
        <Icon name="power" size={14} />
        <Icon name="help" size={16} />
      </Status>
    </Actions>
  </Header>
);

const Grid = () => (
  <GridBody>
    <Table>
      <colgroup>
        <col width="31" />
        <col width="40" />
        <col width="70" />
        <col />
        <col width="220" />
        <col width="153" />
      </colgroup>
      <thead>
        <tr>
          <th />
          <th><HeadCell>ID<Icon name="sort" size={10} /></HeadCell></th>
          <th><HeadCell>Código<Icon name="sort" size={10} /></HeadCell></th>
          <th><HeadCell>Producto<Icon name="sortUp" size={10} /></HeadCell></th>
          <th><HeadCell>Punto de Mantenimiento<Icon name="sort" size={10} /></HeadCell></th>
          <th><HeadCell>Departamento<Icon name="sort" size={10} /></HeadCell></th>
        </tr>
      </thead>
      <tbody>
        {rows.map(([id, place], i) => (
          <Row key={id} $on={i === 0}>
            <th scope="row">{i + 1}</th>
            <td>{id}</td>
            <td>{i === 0 && "AS30"}</td>
            <td>{i === 0 && <>[PR38837] <Mark>LASER </Mark>DIODO INNOVA</>}</td>
            <td>{place}</td>
            <td />
          </Row>
        ))}
      </tbody>
    </Table>
    <VTrack><VThumb /></VTrack>
  </GridBody>
);

const EquipmentDialog = () => (
  <Dialog role="dialog" aria-labelledby="dialog-title">
    <DialogHead>
      <span id="dialog-title">Equipo</span>
      <IconButton $w={20} $color="#777" aria-label="Cerrar"><Icon name="closeBold" size={10} /></IconButton>
    </DialogHead>
    <TabBar $h={32} $pad={4} $bg="#f5f5f5"><Tab $on>Equipo</Tab></TabBar>
    <Form>
      <Field $w={249}>
        <label htmlFor="tipo">Tipo</label>
        <Control $required><select id="tipo" /><Icon name="caret" size={12} /></Control>
        <IconButton $w={25} type="button" aria-label="Configurar"><Icon name="gearLine" size={17} /></IconButton>
      </Field>
      <Field $w={299}>
        <label htmlFor="producto">Producto</label>
        <Control $required><Icon name="magnifier" size={15} /><input id="producto" /></Control>
      </Field>
      <Field $w={249}>
        <label htmlFor="cliente">Cliente</label>
        <Control><Icon name="magnifier" size={15} /><input id="cliente" /></Control>
      </Field>
      <Field $w={249}>
        <label htmlFor="almacen">Almacén</label>
        <Control><select id="almacen" /><Icon name="caret" size={12} /></Control>
      </Field>
      <FormActions>
        <FrameButton type="button" $w={150}><Icon name="company" /><span>Nueva Empresa</span></FrameButton>
        <FrameButton type="button" $w={150}><Icon name="person" /><span>Nueva Persona</span></FrameButton>
        <FrameButton type="button" $w={150}><Icon name="product" /><span>Nuevo Producto</span></FrameButton>
        <FrameButton type="button" $w={90}><Icon name="next" /><span>Siguiente</span></FrameButton>
      </FormActions>
    </Form>
  </Dialog>
);

export default function App() {
  return (
    <Page>
      <GlobalStyle />
      <Browser />
      <AppFrame>
        <TopBar />
        <Body>
          <Sidebar>
            {sidebar.map((s) => (
              <SideItem key={s.text} href="#" $sub={s.sub} $open={s.open}>
                {s.el || <Icon name={s.icon} />}
                <span>{s.text}</span>
                {s.more && <Icon name="caret" size={12} />}
                {s.open && <Icon name="caretUp" size={12} />}
              </SideItem>
            ))}
          </Sidebar>
          <Workspace>
            <TabBar $h={34} $pad={4}>
              <Tab>Home</Tab>
              <Tab $on>Equipos/Instalaciones<Icon name="closeBold" size={8} /></Tab>
            </TabBar>
            <PanelTitle>Equipos</PanelTitle>
            <GridPanel>
              <Toolbar>
                <ToolButton><Icon name="plus" />Nuevo</ToolButton>
                <ToolButton><Icon name="filter" size={14} />Filtro</ToolButton>
                <ToolButton><Icon name="refresh" />Actualizar</ToolButton>
                <ToolButton><Icon name="fav" />Añadir a Favoritos</ToolButton>
                <ToolButton aria-label="Imprimir"><Icon name="print" /></ToolButton>
              </Toolbar>
              <Grid />
              <HTrack><HThumb /></HTrack>
            </GridPanel>
          </Workspace>
        </Body>
        <Backdrop><EquipmentDialog /></Backdrop>
        <Callout />
      </AppFrame>
    </Page>
  );
}
